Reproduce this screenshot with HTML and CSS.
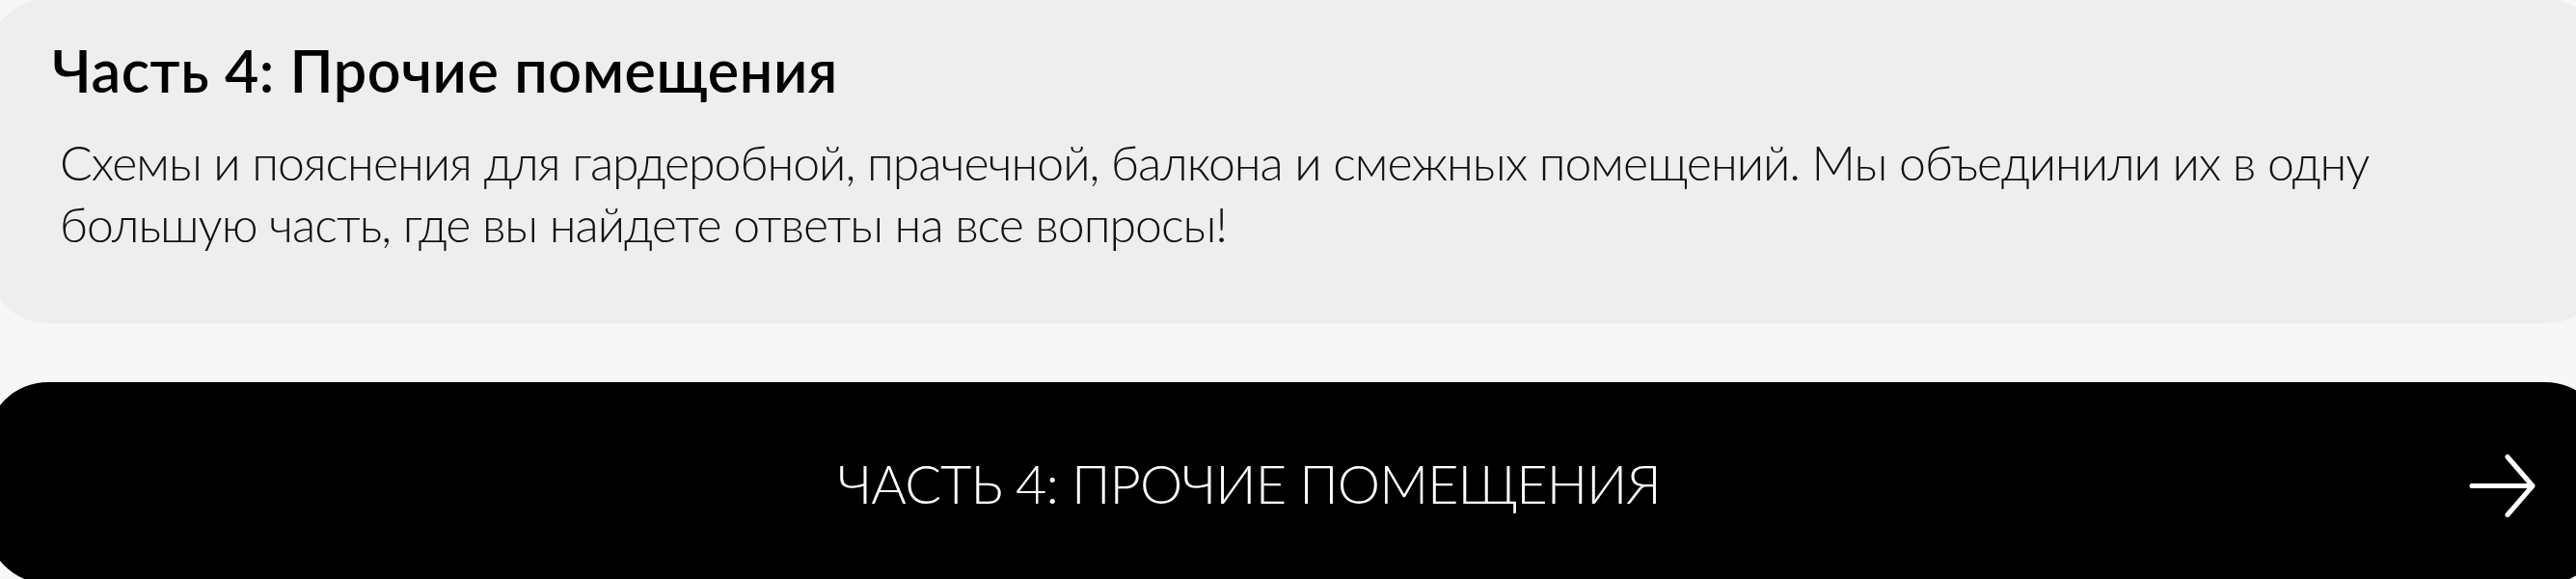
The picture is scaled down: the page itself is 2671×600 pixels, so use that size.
FILE: index.html
```html
<!DOCTYPE html>
<html lang="ru">
<head>
<meta charset="utf-8">
<title>Часть 4: Прочие помещения</title>
<link rel="stylesheet" href="styles.css">
</head>
<body>
  <main class="page">
    <section class="card">
      <h2 class="card__title">Часть 4: Прочие помещения</h2>
      <p class="card__text">Схемы и пояснения для гардеробной, прачечной, балкона и смежных помещений. Мы объединили их в одну большую часть, где вы найдете ответы на все вопросы!</p>
    </section>
    <a class="cta" href="#part-4">
      <span class="cta__label">ЧАСТЬ 4: ПРОЧИЕ ПОМЕЩЕНИЯ</span>
      <svg class="cta__arrow" viewBox="0 0 70 70" aria-hidden="true">
        <path d="M3 37.5H66M40 7.5L66 37.5L40 67.5" fill="none" stroke="#fff" stroke-width="5" stroke-linecap="round" stroke-linejoin="round"/>
      </svg>
    </a>
  </main>
</body>
</html>
```
FILE: styles.css
```css
html, body {
  margin: 0;
  padding: 0;
}

body {
  background: #f7f7f7;
  overflow: hidden;
  font-family: Lato, "Noto Sans", "Liberation Sans", sans-serif;
  color: #000;
}

/* the blocks are wider than the viewport, bleeding off both sides */
.page {
  display: flex;
  flex-direction: column;
  gap: 61px;
  margin: -1px -32px 0 -14px;
}

.card {
  background: #eeeeee;
  border-radius: 64px;
  padding: 37px 160px 71px 68px;
}

.card__title {
  margin: 0;
  font-size: 61px;
  font-weight: 600;
  line-height: 73px;
  letter-spacing: 0.55px;
}

.card__text {
  margin: 27px 0 0;
  padding-left: 8px;
  font-size: 50px;
  font-weight: 300;
  line-height: 64px;
  letter-spacing: -1px;
  color: #111;
}

.cta {
  display: flex;
  align-items: center;
  height: 209px;
  padding: 0 73px 0 44px;
  background: #000;
  border-radius: 64px;
  color: #fff;
  text-decoration: none;
}

.cta__label {
  flex: 1;
  text-align: center;
  font-size: 56px;
  font-weight: 300;
  line-height: 1.2;
  letter-spacing: -1px;
}

.cta__arrow {
  width: 70px;
  height: 70px;
  flex: none;
}
```
